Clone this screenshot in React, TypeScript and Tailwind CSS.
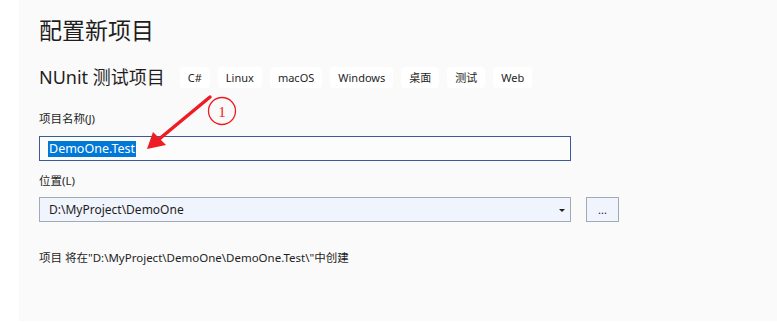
const tags = ["C#", "Linux", "macOS", "Windows", "桌面", "测试", "Web"];

export default function App() {
  return (
    <div
      className="flex h-[322px] w-[777px] bg-white text-[#1e1e1e]"
      style={{ fontFamily: '"Noto Sans", "Noto Sans CJK SC", sans-serif' }}
    >
      <div className="w-[19px] shrink-0 bg-white" />
      <div className="relative h-[321px] flex-1 bg-[#fafafa] pl-[20px]">
        <h1 className="pt-[13px] text-[23px] leading-[34px] text-[#1e1e1e]">配置新项目</h1>

        <div className="mt-[17px] flex items-center">
          <span className="text-[18px] leading-[26px]">NUnit 测试项目</span>
          <div className="ml-[15px] flex gap-[8px]">
            {tags.map((t) => (
              <span
                key={t}
                className="flex h-[21px] items-center rounded-[4px] bg-white px-[8px] text-[11px] leading-[15px] text-[#1e1e1e]"
              >
                {t}
              </span>
            ))}
          </div>
        </div>

        <div className="mt-[21px] text-[11.5px] leading-[16px]">项目名称(J)</div>
        <div className="mt-[9px] flex h-[25px] w-[532px] items-center border border-[#3c5a9a] bg-[#fcfcfc] px-[8px]">
          <span className="bg-[#0078d7] px-[1px] text-[12.5px] leading-[16px] text-white">DemoOne.Test</span>
        </div>

        <div className="mt-[12px] text-[11.5px] leading-[16px]">位置(L)</div>
        <div className="mt-[8px] flex items-center gap-[15px]">
          <div className="flex h-[25px] w-[532px] items-center justify-between border border-[#a3a9b5] bg-[#f0f4fc] pl-[9px] pr-[3px]">
            <span className="text-[12px] leading-[16px]">D:\MyProject\DemoOne</span>
            <svg width="10" height="10" viewBox="0 0 10 10">
              <path d="M2 4 L8 4 L5 7 Z" fill="#1e1e1e" />
            </svg>
          </div>
          <div className="flex h-[25px] w-[33px] items-center justify-center border border-[#a3a9b5] bg-[#f0f4fc] text-[11px] leading-none">
            ...
          </div>
        </div>

        <div className="mt-[28px] text-[11.5px] leading-[16px]">
          项目 将在"D:\MyProject\DemoOne\DemoOne.Test\"中创建
        </div>

        {/* annotation: arrow + circled number */}
        <svg className="absolute left-[-19px] top-0" width="777" height="322" viewBox="0 0 777 322">
          <line x1="210" y1="97" x2="158" y2="140" stroke="#ee1c24" strokeWidth="3.5" strokeLinecap="round" />
          <path d="M147 149 L153 132 L166 145 Z" fill="#ee1c24" />
          <circle cx="222" cy="111" r="13.5" fill="none" stroke="#ee1c24" strokeWidth="1.3" />
          <text x="222" y="117" textAnchor="middle" fontSize="15" fill="#ee1c24" fontFamily='"Liberation Serif", serif'>1</text>
        </svg>
      </div>
    </div>
  );
}
